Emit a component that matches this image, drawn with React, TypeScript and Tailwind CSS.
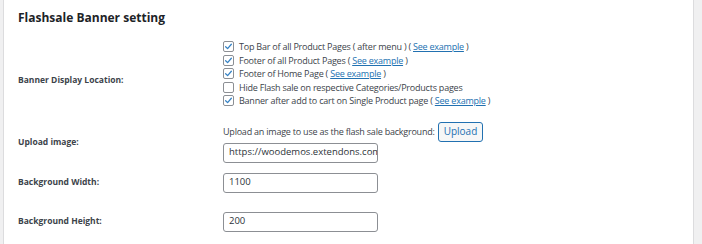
import React from 'react';

interface LocationOption {
  label: string;
  checked: boolean;
  example?: boolean;
}

const locations: LocationOption[] = [
  { label: 'Top Bar of all Product Pages ( after menu ) (', checked: true, example: true },
  { label: 'Footer of all Product Pages (', checked: true, example: true },
  { label: 'Footer of Home Page (', checked: true, example: true },
  { label: 'Hide Flash sale on respective Categories/Products pages', checked: false },
  { label: 'Banner after add to cart on Single Product page (', checked: true, example: true },
];

function Checkbox({ checked }: { checked: boolean }) {
  return (
    <span className="w-[11px] h-[11px] shrink-0 rounded-[2px] border border-[#8c8f94] bg-white flex items-center justify-center">
      {checked && (
        <svg viewBox="0 0 12 12" className="w-[9px] h-[9px]">
          <path d="M2.2 6.3 L4.8 8.8 L9.8 3" fill="none" stroke="#3582c4" strokeWidth="1.7" strokeLinecap="round" strokeLinejoin="round" />
        </svg>
      )}
    </span>
  );
}

function Label({ children, className = '' }: { children: React.ReactNode; className?: string }) {
  return <div className={`text-[8.5px] font-bold text-[#3c434a] ${className}`}>{children}</div>;
}

function TextInput({ value }: { value: string }) {
  return (
    <div className="w-[155px] h-[20px] rounded-[3px] border border-[#8c8f94] bg-white px-[5px] flex items-center overflow-hidden whitespace-nowrap text-[9.5px] text-[#2c3338]">
      {value}
    </div>
  );
}

export default function App() {
  return (
    <div className="w-[702px] h-[244px] bg-[#f0f0f1] flex overflow-hidden" style={{ fontFamily: '"Open Sans", "Noto Sans", sans-serif' }}>
      <div className="ml-[3px] mr-[8px] flex-1 bg-white border-x border-[#dcdcde] px-[14px]">
        <h2 className="text-[12px] font-bold text-[#1d2327] pt-[10px] leading-[16px]">Flashsale Banner setting</h2>

        <div className="grid grid-cols-[205px_1fr] mt-[14px] items-center">
          <Label className="pt-[14px]">Banner Display Location:</Label>
          <div className="flex flex-col">
            {locations.map((loc) => (
              <div key={loc.label} className="flex items-center gap-[5px] h-[13.5px] text-[9px] tracking-[-0.22px] text-[#3c434a] whitespace-nowrap">
                <Checkbox checked={loc.checked} />
                <span>
                  {loc.label}
                  {loc.example && (
                    <>
                      {' '}
                      <a className="text-[#2271b1] underline">See example</a> )
                    </>
                  )}
                </span>
              </div>
            ))}
          </div>

          <Label className="mt-[14px]">Upload image:</Label>
          <div className="mt-[14px] flex flex-col">
            <div className="flex items-center gap-[3px] text-[9px] tracking-[-0.22px] text-[#3c434a]">
              <span>Upload an image to use as the flash sale background:</span>
              <button className="h-[20px] px-[5px] rounded-[3px] border border-[#2271b1] bg-[#f6f7f7] text-[10px] tracking-normal text-[#2271b1]">Upload</button>
            </div>
            <div className="mt-[1px]">
              <TextInput value="https://woodemos.extendons.com" />
            </div>
          </div>

          <Label className="mt-[10px]">Background Width:</Label>
          <div className="mt-[10px]">
            <TextInput value="1100" />
          </div>

          <Label className="mt-[19px]">Background Height:</Label>
          <div className="mt-[19px]">
            <TextInput value="200" />
          </div>
        </div>
      </div>
    </div>
  );
}
